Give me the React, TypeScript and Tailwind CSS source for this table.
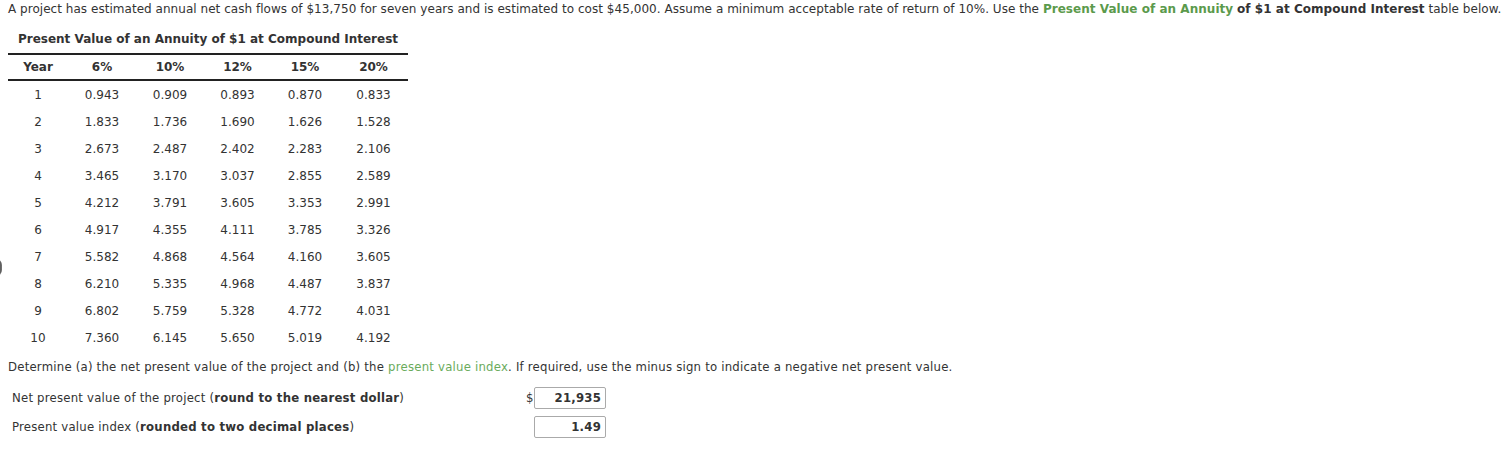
const rows = [
  ["1", "0.943", "0.909", "0.893", "0.870", "0.833"],
  ["2", "1.833", "1.736", "1.690", "1.626", "1.528"],
  ["3", "2.673", "2.487", "2.402", "2.283", "2.106"],
  ["4", "3.465", "3.170", "3.037", "2.855", "2.589"],
  ["5", "4.212", "3.791", "3.605", "3.353", "2.991"],
  ["6", "4.917", "4.355", "4.111", "3.785", "3.326"],
  ["7", "5.582", "4.868", "4.564", "4.160", "3.605"],
  ["8", "6.210", "5.335", "4.968", "4.487", "3.837"],
  ["9", "6.802", "5.759", "5.328", "4.772", "4.031"],
  ["10", "7.360", "6.145", "5.650", "5.019", "4.192"],
];

const headers = ["Year", "6%", "10%", "12%", "15%", "20%"];
const colW = ["w-[60px]", "w-[68px]", "w-[68px]", "w-[67px]", "w-[68px]", "w-[69px]"];

export default function App() {
  return (
    <div className="relative min-h-[461px] bg-white text-[#333] font-['DejaVu_Sans',Verdana,sans-serif] text-[12px]">
      {/* stray edge mark from the page behind */}
      <div className="absolute left-[-4px] top-[259px] w-[6px] h-[17px] rounded-r-full bg-gradient-to-r from-[#222] to-[#777]" />

      <div className="px-[8px] pt-[1px]">
        <p className="leading-[16px] whitespace-nowrap tracking-[0.035px]">
          A project has estimated annual net cash flows of $13,750 for seven years and is estimated to cost $45,000. Assume a minimum acceptable rate of return of 10%. Use the{" "}
          <span className="font-bold text-[#5b9a4c]">Present Value of an Annuity</span>{" "}
          <span className="font-bold">of $1 at Compound Interest</span> table below.
        </p>

        <div className="w-[400px] mt-[14px]">
          <div className="text-center font-bold leading-[16px] pb-[6px]">
            Present Value of an Annuity of $1 at Compound Interest
          </div>
          <div className="flex border-t-[2px] border-b-[2px] border-[#222] h-[28px] items-center font-bold">
            {headers.map((h, i) => (
              <div key={h} className={`${colW[i]} text-center`}>{h}</div>
            ))}
          </div>
          <div>
            {rows.map((r) => (
              <div key={r[0]} className="flex h-[27px] items-center">
                {r.map((c, i) => (
                  <div key={i} className={`${colW[i]} text-center`}>{c}</div>
                ))}
              </div>
            ))}
          </div>
        </div>

        <div className="font-['DejaVu_Sans_Condensed','Liberation_Sans',sans-serif] text-[13px] tracking-[0.22px]">
          <p className="leading-[16px] mt-[8px]">
            Determine (a) the net present value of the project and (b) the{" "}
            <span className="text-[#6aab5c]">present value index</span>. If required, use the minus sign to indicate a negative net present value.
          </p>

          <div className="flex items-center mt-[12px] pl-[4px] h-[22px]">
            <div className="w-[514px]">
              Net present value of the project (<span className="font-bold">round to the nearest dollar</span>)
            </div>
            <span className="w-[8px]">$</span>
            <div className="w-[72px] h-[22px] border border-[#aaa] rounded-[2px] text-right pr-[4px] font-bold leading-[20px]">
              21,935
            </div>
          </div>

          <div className="flex items-center mt-[7px] pl-[4px] h-[22px]">
            <div className="w-[522px]">
              Present value index (<span className="font-bold">rounded to two decimal places</span>)
            </div>
            <div className="w-[72px] h-[22px] border border-[#aaa] rounded-[2px] text-right pr-[4px] font-bold leading-[20px]">
              1.49
            </div>
          </div>
        </div>
      </div>
    </div>
  );
}
